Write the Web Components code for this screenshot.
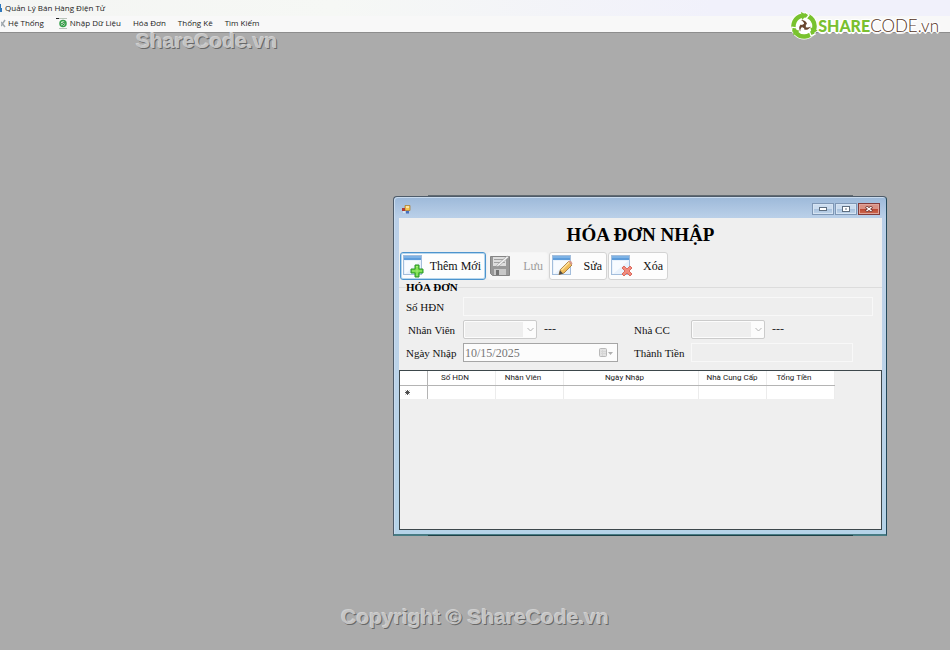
<!DOCTYPE html>
<html lang="vi">
<head>
<meta charset="utf-8">
<title>Quản Lý Bán Hàng Điện Tử</title>
<style>
html, body { height: 100%; margin: 0; }
body { font-family: "Liberation Serif", "Times New Roman", serif; font-size: 11px; color: #111; overflow: hidden; }
</style>
</head>
<body>
<sales-app></sales-app>
<script>
function define(name, html, setup) {
  const template = document.createElement('template');
  template.innerHTML = html;
  customElements.define(name, class extends HTMLElement {
    constructor() {
      super();
      this.attachShadow({ mode: 'open' }).append(template.content.cloneNode(true));
    }
    connectedCallback() { if (setup) setup(this, this.shadowRoot); }
  });
}

const sheet = `
  <rect x="1.5" y="1.5" width="18" height="19" fill="#e9f2fc" stroke="#a3bddb"/>
  <rect x="2" y="2" width="17" height="4" fill="#5e9ddb"/>
  <path d="M2 3h17" stroke="#9cc8f0"/>
  <path d="M3 20V7h15L3 20" fill="#f8fbff"/>`;
const icons = {
  add: sheet + `<g transform="translate(-1 -1)"><path d="M14 12h4v4h4v4h-4v4h-4v-4h-4v-4h4z" fill="#67d33c" stroke="#2b962b"/><path d="M15 13.5h2M16 13v10M11 18h10" stroke="#a5ee78"/></g>`,
  edit: sheet + `<path d="M8 20.500l1.500-5 8-8 3.500 3.500-8 8z" fill="#f0bd5b" stroke="#ad8145"/><path d="M10 15.500l8-8 1 1-8 8z" fill="#ffe4a0"/><path d="M17.500 7.500l1-1q2 0 3 3l-1 1.500z" fill="#d89a8c"/><path d="M8 20.500l1-4 3 3z" fill="#494947"/>`,
  remove: sheet + `<path d="M12 14l2-2 3 3 3-3 2 2-3 3 3 3-2 2-3-3-3 3-2-2 3-3z" fill="#f08c7e" stroke="#dc6a5e"/>`,
  save: `<path d="M1.500 2.500h19v19h-17l-2-2z" fill="#989898" stroke="#858585"/><path d="M4 3h13v9H4z" fill="#dedede"/><path d="M5 5.500h11M5 8.500h11" stroke="#a2a2a2"/><path d="M5 15h12v6H5z" fill="#c8c8c8"/><path d="M7 16h3v5H7z" fill="#747474"/><path d="M8 11L18 2l2 1-10 9-3 1z" fill="#f3f3f3" stroke="#909090" stroke-width=".6"/>`
};

define('app-title', `
  <style>
    :host { display: flex; align-items: center; height: 16px; gap: 3px; background: linear-gradient(90deg, #f4f5f3, #f6f8f5 35%, #f1f1fb 75%); font: 8px/16px "Open Sans", sans-serif; color: #222; white-space: nowrap; }
    svg { width: 2px; height: 8px; }
  </style>
  <svg viewBox="0 0 2 8" aria-hidden="true"><path d="M0 0h1v4h1v4H0z" fill="#2f78bd"/></svg>
  <slot></slot>`);

define('app-menu', `
  <style>
    :host { display: flex; align-items: center; height: 14px; gap: 12px; padding: 0 0 2px 1px; background: #f8f8f8; border-bottom: 1px solid #8d8d8d; }
  </style>
  <slot></slot>`);

define('menu-item', `
  <style>
    :host { display: block; }
    button { display: flex; align-items: center; gap: 2px; padding: 0; border: 0; background: none; color: #222; font: 8px/14px "Open Sans", sans-serif; white-space: nowrap; }
  </style>
  <button type="button"><slot name="icon"></slot><slot></slot></button>`);

define('share-logo', `
  <style>
    :host { display: flex; align-items: center; font: 300 17px/20px Lato, sans-serif; color: #54321c; white-space: nowrap;
      text-shadow: 1px 1px 0 #fff, -1px -1px 0 #fff, 1px -1px 0 #fff, -1px 1px 0 #fff, 2px 0 0 #fff, 0 2px 0 #fff, 0 0 3px #fff; }
    svg { width: 28px; height: 30px; }
    b { color: #7ac030; font-size: 16px; font-weight: 900; }
  </style>
  <svg viewBox="0 0 28 30" aria-hidden="true">
    <circle cx="14" cy="15" r="13.500" fill="#fff"/>
    <g fill="none" stroke="#79c22e" stroke-width="4.500">
      <path d="M4.500 20A11 11 0 0 1 12 4.600"/>
      <path d="M4.500 20A11 11 0 0 1 12 4.600" transform="rotate(120 14 15)"/>
      <path d="M4.500 20A11 11 0 0 1 12 4.600" transform="rotate(240 14 15)"/>
    </g>
    <g fill="#79c22e"><path d="M11 1l6 3-5 5z"/><path d="M11 1l6 3-5 5z" transform="rotate(120 14 15)"/><path d="M11 1l6 3-5 5z" transform="rotate(240 14 15)"/></g>
    <g fill="none" stroke="#fff" stroke-width="1.300"><path d="M15 1l4 3-4 5"/><path d="M15 1l4 3-4 5" transform="rotate(120 14 15)"/><path d="M15 1l4 3-4 5" transform="rotate(240 14 15)"/></g>
    <g fill="#68452f"><path d="M11 9q5 0 6 4l-3 2q1-4-3-6"/><path d="M11 9q5 0 6 4l-3 2q1-4-3-6" transform="rotate(120 14 15)"/><path d="M11 9q5 0 6 4l-3 2q1-4-3-6" transform="rotate(240 14 15)"/><circle cx="14" cy="15" r="2"/></g>
  </svg>
  <span><b>SHARE</b>CODE.vn</span>`);

define('water-mark', `
  <style>
    :host { display: block; font: bold 21px/24px "Liberation Sans", Arial, sans-serif; color: #c4c4c4; text-shadow: 1px 1px 0 #686868, -1px -1px 0 #d0d0d0; white-space: nowrap; }
  </style>
  <slot></slot>`);

define('tool-button', `
  <style>
    :host { display: block; box-sizing: border-box; height: 28px; }
    button { display: flex; align-items: center; justify-content: space-between; box-sizing: border-box; width: 100%; height: 100%; padding: 0 4px 0 1px; border: 1px solid #d3d3d3; border-radius: 3px; background: #fdfdfd; color: #111; font: 12px/16px "Liberation Serif", serif; white-space: nowrap; }
    svg { width: 23px; height: 25px; flex: none; }
    :host([primary]) button { border-color: #4d94cd; box-shadow: inset 0 0 0 1px #b7d7ee; }
    button:disabled { color: #9c9c9c; border-color: #f5f5f5; background: #f7f7f7; }
  </style>
  <button type="button"><svg viewBox="0 0 23 25" aria-hidden="true"></svg><span><slot></slot></span></button>`,
  (host, root) => {
    root.querySelector('svg').innerHTML = icons[host.getAttribute('icon')];
    root.querySelector('button').disabled = host.hasAttribute('disabled');
  });

define('text-field', `
  <style>
    :host { display: contents; }
    label { align-self: center; white-space: nowrap; padding-left: var(--label-indent, 0); }
    input { grid-column: var(--field-span, auto); box-sizing: border-box; width: var(--field-width, 100%); min-width: 0; height: 19px; padding: 0 2px; border: 1px solid #f8f8f8; background: #eeeeee; font: inherit; }
  </style>
  <label for="f"></label><input id="f" type="text" disabled>`,
  (host, root) => { root.querySelector('label').textContent = host.getAttribute('label'); });

define('combo-field', `
  <style>
    :host { display: contents; }
    label { align-self: center; white-space: nowrap; padding-left: var(--label-indent, 0); }
    .row { display: flex; align-items: center; gap: 7px; color: #333; font-size: 12px; }
    .box { display: grid; width: 74px; height: 19px; }
    select, svg { grid-area: 1 / 1; }
    select { appearance: none; box-sizing: border-box; width: 100%; height: 19px; border: 1px solid #cbcbcb; border-radius: 2px; background: linear-gradient(#eeeeee, #eeeeee) 1px 1px / 58px 15px no-repeat #fcfcfc; opacity: 1; }
    svg { justify-self: end; align-self: center; width: 7px; height: 5px; margin-right: 3px; }
  </style>
  <label for="f"></label>
  <div class="row"><div class="box"><select id="f" disabled></select><svg viewBox="0 0 7 5" aria-hidden="true"><path d="M.5 1l3 3 3-3" fill="none" stroke="#b4b4b4"/></svg></div><span>---</span></div>`,
  (host, root) => { root.querySelector('label').textContent = host.getAttribute('label'); });

define('date-field', `
  <style>
    :host { display: contents; }
    label { align-self: center; white-space: nowrap; }
    .box { display: flex; align-items: center; box-sizing: border-box; height: 19px; border: 1px solid #a6a6a6; background: #fcfcfc; padding-right: 4px; }
    input { flex: 1; min-width: 0; padding: 0 1px; border: 0; background: none; color: #777; font: 12px/16px "Liberation Serif", serif; }
    svg { width: 14px; height: 10px; }
  </style>
  <label for="f"></label>
  <div class="box"><input id="f" type="text" value="10/15/2025" disabled>
    <svg viewBox="0 0 14 10" aria-hidden="true"><rect x=".5" y=".5" width="7" height="8" rx="1" fill="#e2e2e2" stroke="#b9b9b9"/><path d="M2 3.500h5M2 5.500h5M3.500 2v6" stroke="#d6d6d6"/><path d="M9 4h5l-2.500 3z" fill="#b0b0b0"/></svg></div>`,
  (host, root) => { root.querySelector('label').textContent = host.getAttribute('label'); });

define('group-box', `
  <style>
    :host { display: block; }
    fieldset { display: grid; grid-template-columns: 57px 155px 73px 1fr; grid-template-rows: 19px 19px 19px; row-gap: 4px; margin: 0; padding: 3px 9px 8px 7px; border: 0 solid #dcdcdc; border-top-width: 1px; min-width: 0; }
    legend { padding: 0; font: bold 11px/14px "Liberation Serif", serif; color: #000; }
  </style>
  <fieldset><legend></legend><slot></slot></fieldset>`,
  (host, root) => { root.querySelector('legend').textContent = host.getAttribute('caption'); });

define('invoice-table', `
  <style>
    :host { display: block; box-sizing: border-box; border: 1px solid #3d474b; background: #efefef; min-height: 0; }
    table { border-collapse: collapse; table-layout: fixed; width: 434px; background: #fff; font: 8px/10px Roboto, sans-serif; color: #222; }
    th, td { box-sizing: border-box; height: 14px; padding: 0; border-right: 1px solid #ececec; font-weight: normal; white-space: nowrap; }
    th { border-bottom: 1px solid #b4b4b4; padding-right: 12px; }
    th.full { padding-right: 0; }
    tr > :first-child { border-right-color: #b4b4b4; }
    td:first-child { padding-left: 5px; }
    svg { display: block; width: 5px; height: 5px; }
    .r { width: 27px; } .s { width: 68px; } .d { width: 135px; }
  </style>
  <table>
    <colgroup><col class="r"><col class="s"><col class="s"><col class="d"><col class="s"><col class="s"></colgroup>
    <thead><tr><th></th><th>Số HDN</th><th>Nhân Viên</th><th>Ngày Nhập</th><th class="full">Nhà Cung Cấp</th><th>Tổng Tiền</th></tr></thead>
    <tbody><tr><td><svg viewBox="0 0 5 5" aria-hidden="true"><path d="M2.500 0v5M0 2.500h5M.7.7l3.600 3.600M4.300.7L.7 4.300" stroke="#444" stroke-width=".9"/></svg></td><td></td><td></td><td></td><td></td><td></td></tr></tbody>
  </table>`);

define('window-control', `
  <style>
    :host { display: block; }
    button { display: grid; place-items: center; box-sizing: border-box; width: 22px; height: 12px; padding: 0; border: 1px solid #7f97b5; background: linear-gradient(#cbdcef 45%, #a8c1dd 50%, #bfd4ea); box-shadow: inset 0 0 0 1px #d6e4f3; }
    :host([danger]) button { border-color: #833c3b; background: linear-gradient(#d99184 45%, #bb4632 50%, #ce6b50); box-shadow: inset 0 0 0 1px #dfa49a; }
  </style>
  <button type="button"><slot></slot></button>`,
  (host, root) => root.querySelector('button').setAttribute('aria-label', host.getAttribute('label')));

define('desktop-window', `
  <style>
    :host { display: flex; flex-direction: column; box-sizing: border-box; border: 1px solid #4e5b69; border-right-color: #22485a; border-bottom: 2px solid #477b83; border-radius: 4px 4px 0 0; background: linear-gradient(#9db9d9, #b9cfe8 20px, #bed2e8 80px, #b5d3e8); padding: 0 4px 4px 5px; box-shadow: inset 1px 1px 0 #c9dbee; }
    :host::before, :host::after { content: ""; position: absolute; left: 34px; right: 33px; height: 1px; background: #626a70; top: -2px; }
    :host::after { top: auto; bottom: -2px; background: #1d4148; }
    header { display: flex; align-items: center; height: 21px; padding: 3px 2px 0 2px; box-sizing: border-box; gap: 1px; }
    header > svg { width: 10px; height: 9px; margin-right: auto; }
    main { flex: 1; min-height: 0; display: flex; flex-direction: column; background: #efefef; }
  </style>
  <header>
    <svg viewBox="0 0 10 9" aria-hidden="true"><path d="M4 .5h5v5H4z" fill="#f6c850" stroke="#a8772b" stroke-width=".7"/><path d="M1 3h3v3H1z" fill="#ad3b35"/><path d="M5 6h3v2.500H5z" fill="#496fbd"/><path d="M2 7h2M5 2h3" stroke="#fff"/></svg>
    <window-control label="Thu nhỏ"><svg width="8" height="4" viewBox="0 0 8 4"><rect x=".5" y=".5" width="7" height="3" fill="#fff" stroke="#5e6e80"/></svg></window-control>
    <window-control label="Phóng to"><svg width="8" height="6" viewBox="0 0 8 6"><rect x=".5" y=".5" width="7" height="5" fill="#fff" stroke="#5e6e80"/><path d="M3 3h2" stroke="#5e6e80"/></svg></window-control>
    <window-control label="Đóng" danger><svg width="8" height="6" viewBox="0 0 8 6"><path d="M1 0.500l6 5M7 .5l-6 5" stroke="#713531" stroke-width="3"/><path d="M1.500 1l5 4M6.500 1l-5 4" stroke="#fff" stroke-width="1.500"/></svg></window-control>
  </header>
  <main><slot></slot></main>`);

define('invoice-form', `
  <style>
    :host { display: flex; flex: 1; min-height: 0; flex-direction: column; }
    h1 { margin: 0; padding-top: 5px; text-align: center; font: bold 19px/24px "Liberation Serif", serif; color: #000; }
    nav { display: grid; grid-template-columns: 86px 61px 58px 60px; column-gap: 1px; padding: 5px 0 0 1px; }
    invoice-table { flex: 1; }
    .wide { --field-span: 2 / 5; }
    .indent { --label-indent: 2px; }
    .right { --label-indent: 16px; --field-width: 162px; }
  </style>
  <h1>HÓA ĐƠN NHẬP</h1>
  <nav>
    <tool-button icon="add" primary>Thêm Mới</tool-button>
    <tool-button icon="save" disabled>Lưu</tool-button>
    <tool-button icon="edit">Sửa</tool-button>
    <tool-button icon="remove">Xóa</tool-button>
  </nav>
  <group-box caption="HÓA ĐƠN">
    <text-field class="wide" label="Số HĐN"></text-field>
    <combo-field class="indent" label="Nhân Viên"></combo-field>
    <combo-field class="right" label="Nhà CC"></combo-field>
    <date-field label="Ngày Nhập"></date-field>
    <text-field class="right" label="Thành Tiền"></text-field>
  </group-box>
  <invoice-table></invoice-table>`);

define('sales-app', `
  <style>
    :host { display: flex; flex-direction: column; height: 100%; position: relative; background: #ababab; }
    .workspace { flex: 1; position: relative; }
    desktop-window { position: absolute; left: 393px; right: 63px; top: 163px; bottom: 114px; }
    share-logo { position: absolute; right: 11px; top: 11px; }
    .top { position: absolute; left: 136px; top: -4px; }
    .bottom { position: absolute; left: 0; right: 0; bottom: 21px; text-align: center; }
    .gear { width: 5px; height: 9px; }
    .db { width: 12px; height: 11px; }
  </style>
  <app-title>Quản Lý Bán Hàng Điện Tử</app-title>
  <app-menu>
    <menu-item><svg slot="icon" class="gear" viewBox="0 0 5 9" aria-hidden="true"><path d="M0 7l4-6M0 3l4 5" stroke="#a0a8ae" stroke-width="1.500"/></svg>Hệ Thống</menu-item>
    <menu-item><svg slot="icon" class="db" viewBox="0 0 12 11" aria-hidden="true"><path d="M0 .5h3" stroke="#222"/><path d="M3 .5h8M3 10.500h8" stroke="#b8c3b8"/><circle cx="7" cy="5.500" r="3" fill="#d9f3d7" stroke="#35a04a" stroke-width="1.500"/><path d="M5 6l4-2M6 7.500l3-2" stroke="#238438"/></svg>Nhập Dữ Liệu</menu-item>
    <menu-item>Hóa Đơn</menu-item>
    <menu-item>Thống Kê</menu-item>
    <menu-item>Tìm Kiếm</menu-item>
  </app-menu>
  <div class="workspace">
    <water-mark class="top">ShareCode.vn</water-mark>
    <desktop-window><invoice-form></invoice-form></desktop-window>
    <water-mark class="bottom">Copyright © ShareCode.vn</water-mark>
  </div>
  <share-logo></share-logo>`);
</script>
</body>
</html>
